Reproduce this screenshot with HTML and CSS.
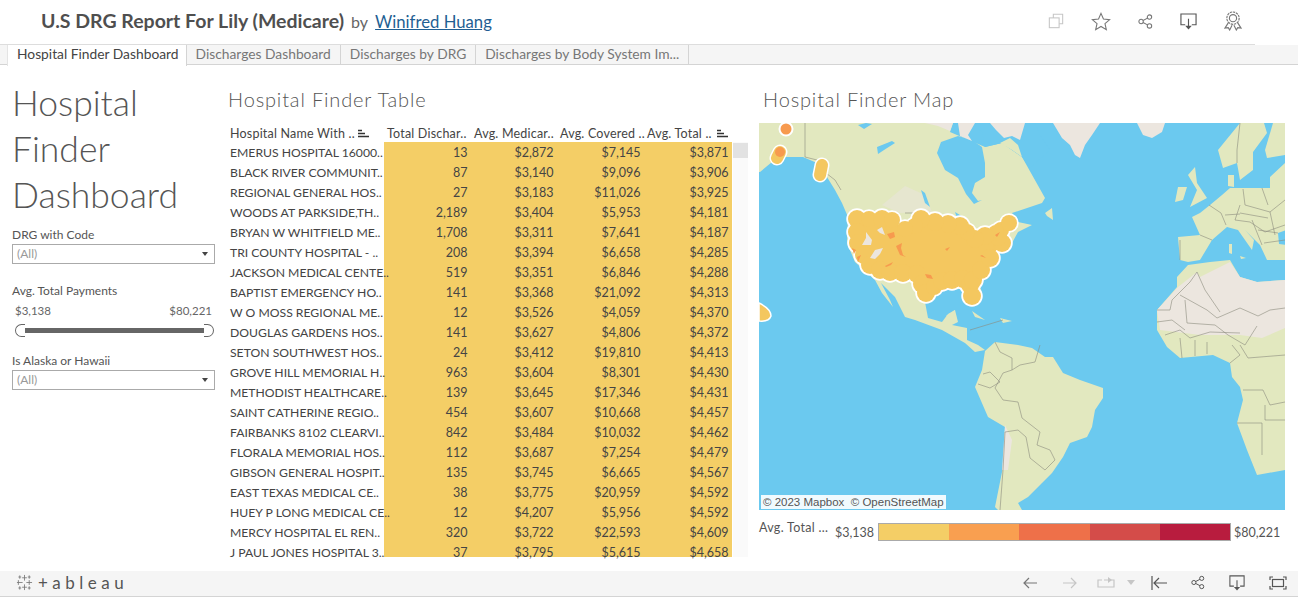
FILE: index.html
```html
<!DOCTYPE html>
<html lang="en">
<head>
  <meta charset="UTF-8" />
  <title>U.S DRG Report For Lily (Medicare)</title>
  <link rel="stylesheet" href="styles.css">
</head>
<body>

  <!-- Top title bar -->
  <header class="topbar">
    <div class="report-title">
      <strong>U.S DRG Report For Lily (Medicare)</strong>
      <span class="by">by</span>
      <a class="author" href="#">Winifred Huang</a>
    </div>
    <div class="top-icons">
      <svg class="icon faded" width="16" height="16" viewBox="0 0 18 18"><path d="M6 5.500V1.500H16.500V12H12.500"/><rect x="1.500" y="5.500" width="11" height="11"/></svg>
      <svg class="icon" width="20" height="19" viewBox="0 0 22 21"><path d="M11 1.500L13.700 7.800L20.500 8.400L15.400 12.800L16.900 19.500L11 16L5.100 19.500L6.600 12.800L1.500 8.400L8.300 7.800Z"/></svg>
      <svg class="icon" width="15" height="15" viewBox="0 0 17 17"><circle cx="3.500" cy="8.500" r="2.500"/><circle cx="13" cy="3.500" r="2.500"/><circle cx="13" cy="13.500" r="2.500"/><path d="M5.700 7.300L10.800 4.700M5.700 9.700L10.800 12.300"/></svg>
      <svg class="icon dark" width="17" height="17" viewBox="0 0 18 18"><path d="M5.500 12.500H1V1H17V12.500H12.500M9 6V15"/><path class="solid" d="M5.500 13.500H12.500L9 17.500Z"/></svg>
      <svg class="icon" width="18" height="20" viewBox="0 0 19 21"><circle cx="9.500" cy="7.500" r="6.500" stroke-dasharray="2.500 0.800"/><circle cx="9.500" cy="7.500" r="3.800"/><path d="M4.500 12.500L1 18L4.500 17.500L6 20L8.500 15M14.500 12.500L18 18L14.500 17.500L13 20L10.500 15"/></svg>
    </div>
  </header>

  <!-- Sheet tabs -->
  <nav class="tabs">
    <span class="tab active">Hospital Finder Dashboard</span>
    <span class="tab">Discharges Dashboard</span>
    <span class="tab">Discharges by DRG</span>
    <span class="tab">Discharges by Body System Im...</span>
  </nav>

  <main class="dashboard">

    <!-- Left column with filters -->
    <aside class="filters">
      <h1 class="dash-title">Hospital<br>Finder<br>Dashboard</h1>

      <div class="filter-label">DRG with Code</div>
      <div class="select"><span>(All)</span><i class="caret"></i></div>

      <div class="filter-label slider-label">Avg. Total Payments</div>
      <div class="range-values"><span>$3,138</span><span>$80,221</span></div>
      <div class="slider">
        <span class="handle left"></span>
        <span class="track"></span>
        <span class="handle right"></span>
      </div>

      <div class="filter-label alaska-label">Is Alaska or Hawaii</div>
      <div class="select"><span>(All)</span><i class="caret"></i></div>
    </aside>

    <!-- Table -->
    <section class="table-panel">
      <h2 class="panel-title">Hospital Finder Table</h2>
      <div class="table-head">
        <div class="head-cell name">Hospital Name With ..
          <svg class="sort" width="11" height="9" viewBox="0 0 11 9"><path d="M0 1.500H4M0 4.500H7M0 7.500H11"/></svg>
        </div>
        <div class="head-cell">Total Dischar..</div>
        <div class="head-cell">Avg. Medicar..</div>
        <div class="head-cell">Avg. Covered ..</div>
        <div class="head-cell">Avg. Total ..
          <svg class="sort" width="11" height="9" viewBox="0 0 11 9"><path d="M0 1.500H4M0 4.500H7M0 7.500H11"/></svg>
        </div>
      </div>
      <div class="table-wrap">
        <div class="table-body">
          <div class="row"><span>EMERUS HOSPITAL 16000..</span><span>13</span><span>$2,872</span><span>$7,145</span><span>$3,871</span></div>
          <div class="row"><span>BLACK RIVER COMMUNIT..</span><span>87</span><span>$3,140</span><span>$9,096</span><span>$3,906</span></div>
          <div class="row"><span>REGIONAL GENERAL HOS..</span><span>27</span><span>$3,183</span><span>$11,026</span><span>$3,925</span></div>
          <div class="row"><span>WOODS AT PARKSIDE,TH..</span><span>2,189</span><span>$3,404</span><span>$5,953</span><span>$4,181</span></div>
          <div class="row"><span>BRYAN W WHITFIELD ME..</span><span>1,708</span><span>$3,311</span><span>$7,641</span><span>$4,187</span></div>
          <div class="row"><span>TRI COUNTY HOSPITAL - ..</span><span>208</span><span>$3,394</span><span>$6,658</span><span>$4,285</span></div>
          <div class="row"><span>JACKSON MEDICAL CENTE..</span><span>519</span><span>$3,351</span><span>$6,846</span><span>$4,288</span></div>
          <div class="row"><span>BAPTIST EMERGENCY HO..</span><span>141</span><span>$3,368</span><span>$21,092</span><span>$4,313</span></div>
          <div class="row"><span>W O MOSS REGIONAL ME..</span><span>12</span><span>$3,526</span><span>$4,059</span><span>$4,370</span></div>
          <div class="row"><span>DOUGLAS GARDENS HOS..</span><span>141</span><span>$3,627</span><span>$4,806</span><span>$4,372</span></div>
          <div class="row"><span>SETON SOUTHWEST HOS..</span><span>24</span><span>$3,412</span><span>$19,810</span><span>$4,413</span></div>
          <div class="row"><span>GROVE HILL MEMORIAL H..</span><span>963</span><span>$3,604</span><span>$8,301</span><span>$4,430</span></div>
          <div class="row"><span>METHODIST HEALTHCARE..</span><span>139</span><span>$3,645</span><span>$17,346</span><span>$4,431</span></div>
          <div class="row"><span>SAINT CATHERINE REGIO..</span><span>454</span><span>$3,607</span><span>$10,668</span><span>$4,457</span></div>
          <div class="row"><span>FAIRBANKS 8102 CLEARVI..</span><span>842</span><span>$3,484</span><span>$10,032</span><span>$4,462</span></div>
          <div class="row"><span>FLORALA MEMORIAL HOS..</span><span>112</span><span>$3,687</span><span>$7,254</span><span>$4,479</span></div>
          <div class="row"><span>GIBSON GENERAL HOSPIT..</span><span>135</span><span>$3,745</span><span>$6,665</span><span>$4,567</span></div>
          <div class="row"><span>EAST TEXAS MEDICAL CE..</span><span>38</span><span>$3,775</span><span>$20,959</span><span>$4,592</span></div>
          <div class="row"><span>HUEY P LONG MEDICAL CE..</span><span>12</span><span>$4,207</span><span>$5,956</span><span>$4,592</span></div>
          <div class="row"><span>MERCY HOSPITAL EL REN..</span><span>320</span><span>$3,722</span><span>$22,593</span><span>$4,609</span></div>
          <div class="row"><span>J PAUL JONES HOSPITAL 3..</span><span>37</span><span>$3,795</span><span>$5,615</span><span>$4,658</span></div>
        </div>
        <div class="scrollbar"><div class="thumb"></div></div>
      </div>
    </section>

    <!-- Map -->
    <section class="map-panel">
      <h2 class="panel-title map-title">Hospital Finder Map</h2>
      <div class="map">
        <svg class="map-svg" width="527" height="387" viewBox="759 123 527 387">
          <defs>
            <g id="usBlob">
              <path d="M857 219L858 243L870 265L890 272L917 274L926 293L942 281L963 279L971 296L973 280L1002 243L1007 223L975 239L960 226L921 219L913 229L882 219Z"/>
              <circle cx="857" cy="219" r="9"/><circle cx="869" cy="219" r="8"/><circle cx="882" cy="219" r="9"/><circle cx="892" cy="220" r="8"/>
              <circle cx="857" cy="232" r="9"/><circle cx="858" cy="243" r="9"/><circle cx="864" cy="255" r="9"/><circle cx="870" cy="265" r="9"/>
              <circle cx="880" cy="270" r="9"/><circle cx="890" cy="272" r="9"/><circle cx="903" cy="273" r="9"/><circle cx="917" cy="274" r="9"/>
              <circle cx="922" cy="284" r="9"/><circle cx="926" cy="293" r="9"/><circle cx="934" cy="287" r="8"/><circle cx="942" cy="281" r="9"/>
              <circle cx="952" cy="280" r="9"/><circle cx="963" cy="279" r="9"/><circle cx="970" cy="285" r="9"/><circle cx="972" cy="296" r="9"/>
              <circle cx="973" cy="280" r="9"/><circle cx="981" cy="270" r="9"/><circle cx="990" cy="258" r="9"/><circle cx="1002" cy="243" r="9"/>
              <circle cx="998" cy="237" r="9"/><circle cx="1001" cy="230" r="8"/><circle cx="1009" cy="223" r="8"/><circle cx="996" cy="233" r="8"/>
              <circle cx="985" cy="236" r="9"/><circle cx="975" cy="239" r="9"/><circle cx="967" cy="232" r="8"/><circle cx="960" cy="226" r="9"/>
              <circle cx="948" cy="224" r="9"/><circle cx="935" cy="222" r="9"/><circle cx="921" cy="219" r="9"/><circle cx="915" cy="226" r="8"/><circle cx="905" cy="229" r="8"/>
            </g>
          </defs>

          <rect class="ocean" x="759" y="123" width="527" height="387"/>

          <!-- north and central america -->
          <path class="land" d="M759 123H953L950 132L985 147L1002 143L1022 157L1045 198L1042 203L1012 213L1018 222L1032 225L1018 232L1012 243L1002 250L978 280L982 293L972 305L962 288L942 290L925 302L928 318L942 322L948 314L955 310L958 322L952 325L967 328L967 340L978 345L985 350L975 352L965 343L942 330L915 320L905 317L895 297L881 283L890 300L893 307L882 293L875 280L855 262L847 243L848 217L842 203L835 190L827 177L817 163L803 157L785 157L772 162L760 172L759 172Z"/>
          <path class="tint" d="M882 205L905 186L925 195L932 212L900 213Z"/>
          <path class="snow" d="M925 123H953L950 131L938 126Z"/>
          <path class="ocean" d="M937 153L941 142L958 136L972 140L982 147L985 163L985 177L975 183L972 193L978 201L982 200L974 204L966 194L958 178L945 170Z"/>
          <path class="ocean" d="M985 147L982 132L972 123H1035L1040 135L1050 150L1030 168L1022 157L1002 143Z"/>
          <path class="snow" d="M958 123H975L968 135L972 141L960 136ZM990 123H1025L1020 140L1012 136L1004 138L996 130Z"/>
          <path class="land" d="M1000 143L1010 138L1018 145L1022 157L1012 150Z"/>
          <path class="ocean" d="M858 125L866 123L872 124L864 129ZM877 147L892 141L895 143L884 150L878 154ZM921 190L925 193L930 207L925 203ZM955 212L968 220L975 230L968 226L957 218Z"/>
          <path class="land" d="M1045 213L1052 208L1053 220L1047 216ZM972 311L985 320L975 317ZM1000 318L1012 321L1003 323Z"/>
          <path class="land" d="M946 316L955 310L953 320Z"/>

          <!-- greenland, iceland -->
          <path class="snow" d="M1053 123H1100L1092 135L1085 145L1080 158L1075 155L1070 145L1062 138Z"/>
          <path class="snow" d="M1137 123H1165L1162 132L1152 138L1143 135Z"/>

          <!-- south america -->
          <path class="land" d="M985 351L995 342L1018 345L1032 348L1045 357L1053 357L1063 373L1080 380L1103 388L1103 398L1095 410L1092 427L1087 437L1070 443L1063 457L1052 473L1042 483L1028 497L1018 503L1022 510H998L995 507L1003 467L1005 427L988 417L975 387L982 370Z"/>
          <path class="snow" d="M1005 425L1012 440L1008 470L1002 470Z"/>

          <!-- africa -->
          <path class="land" d="M1188 265L1177 277L1177 287L1157 310L1157 330L1167 347L1180 358L1213 355L1230 363L1232 377L1240 387L1243 400L1237 423L1247 450L1257 475L1285 470V280L1257 282L1240 277L1230 260L1210 262Z"/>
          <path class="snow" d="M1157 310L1178 287L1197 272L1200 277L1230 262L1240 277L1257 282L1285 280V328L1262 338L1240 335L1200 335L1160 330Z"/>

          <!-- europe -->
          <path class="land" d="M1178 237L1180 260L1188 262L1200 260L1212 240L1227 227L1238 230L1252 250L1254 240L1245 230L1260 245L1267 260L1285 260V163L1270 177L1270 188L1253 188L1230 188L1222 195L1210 205L1200 213L1192 217L1200 235Z"/>
          <path class="land" d="M1218 150L1223 168L1237 163L1240 180L1253 170L1253 152L1267 133L1264 123H1240Z"/>
          <path class="land" d="M1273 123L1265 150L1267 158L1285 155V123Z"/>
          <path class="land" d="M1188 175L1195 167L1197 183L1207 198L1190 207L1197 190Z"/>
          <path class="land" d="M1178 187L1187 187L1183 200L1175 202Z"/>
          <path class="land" d="M1228 175L1234 175L1234 187L1228 186Z"/>
          <path class="land" d="M1229 244L1232 244L1232 254L1229 253ZM1240 256L1246 258L1241 259Z"/>
          <path class="ocean" d="M1278 233L1286 230V245L1279 244Z"/>

          <!-- borders -->
          <path class="border" d="M805 123V157L817 160L822 170L835 180L841 190M905 213H920M1003 320L970 330"/>
          <path class="border" d="M995 342L1000 352L1012 358L1012 370L1020 365L1035 362L1040 345M1012 370L1003 373L995 388L1003 400L1018 402L1022 418L1040 432L1037 445L1050 450L1055 460L1045 470L1030 458L1026 437L1018 430L1005 432L1003 470L1000 510M983 374L990 372L1000 382L990 388L978 384"/>
          <path class="border" d="M1180 260V240M1200 235L1212 240M1209 205L1221 213L1226 225M1243 189L1245 205L1270 212L1285 200M1240 205L1235 220L1250 222L1265 232L1285 225M1240 123L1237 150L1237 163M1252 220L1262 245M1270 212L1275 235M1262 188L1268 205M1240 213L1268 218M1258 230L1278 233M1264 243L1285 240M1225 215L1240 214"/>
          <path class="border" d="M1157 310H1170L1172 300L1190 282L1197 272M1180 295L1207 310L1217 318L1240 308L1258 316L1270 310L1285 308M1185 300L1187 323L1215 325L1228 335L1245 345L1257 326M1197 272L1205 290L1220 312M1165 335L1180 330L1190 338L1210 332L1240 333M1180 338L1182 358M1195 340V356M1207 342V354M1240 345L1248 358L1285 355M1243 390H1263L1270 405L1285 402M1237 423H1262L1262 455M1265 405V420H1285M1157 322L1172 320L1185 330M1230 363L1240 355L1232 345"/>

          <!-- hospital marks -->
          <use class="halo" href="#usBlob"/>
          <path class="halo-line" d="M777 158L780 152M822 165L820 175M786 129V129.010"/>
          <path class="hawaii" d="M759 303Q771 309 771 316Q769 322 759 321Z"/>
          <use class="us" href="#usBlob"/>
          <path class="us-thin" d="M777 158L780 152M822 165L820 175"/>
          <path class="holes" d="M862 245L866 238L866 232L872 240L871 245ZM877 230L882 227L885 235L880 233ZM870 258L875 250L883 248L880 254L875 259Z"/>
          <path class="hot" d="M887 234L894 232L895 237L890 239ZM896 246L902 243L901 248L903 255L906 257L900 255ZM885 266L893 262L891 265L886 267ZM852 248L856 250L854 254ZM857 257L861 255L858 262ZM945 249L950 247L947 251ZM925 274L931 275L933 279L927 278ZM982 255L986 258L980 256ZM1000 232L997 237L995 235Z"/>
          <circle class="hot" cx="786" cy="129" r="5.500"/>
          <circle class="hot" cx="780" cy="152" r="5"/>
        </svg>
        <div class="attribution">© 2023 Mapbox&nbsp; © OpenStreetMap</div>
      </div>
      <div class="legend">
        <span class="legend-name">Avg. Total ...</span>
        <span class="legend-min">$3,138</span>
        <div class="ramp"><i class="c1"></i><i class="c2"></i><i class="c3"></i><i class="c4"></i><i class="c5"></i></div>
        <span class="legend-max">$80,221</span>
      </div>
    </section>
  </main>

  <!-- Bottom toolbar -->
  <footer class="toolbar">
    <div class="logo">
      <svg class="logo-mark" width="17" height="17" viewBox="0 0 18 18"><path d="M9 1V7M6.500 4H11.500M9 11V17M6.500 14H11.500M1 9H7M2.500 6.500V11.500M11 9H17M14 6.500V11.500M4 1.500V5M2.500 3.200H5.500M14 1.500V5M12.500 3.200H15.500M4 13V16.500M2.500 14.800H5.500M14 13V16.500M12.500 14.800H15.500"/></svg>
      <span class="logo-text">+ableau</span>
    </div>
    <div class="tool-icons">
      <svg class="icon" width="14" height="12" viewBox="0 0 14 12"><path d="M14 6H1M6 1L1 6L6 11"/></svg>
      <svg class="icon faded tool-fwd" width="14" height="12" viewBox="0 0 14 12"><path d="M0 6H13M8 1L13 6L8 11"/></svg>
      <svg class="icon faded tool-redo" width="18" height="12" viewBox="0 0 18 12"><path d="M5 3H1V10H17V3H12M7 3H13"/><path class="solid" d="M11 0L15 3L11 6Z"/></svg>
      <svg class="caret-small" width="8" height="5" viewBox="0 0 8 5"><path d="M0 0H8L4 5Z"/></svg>
      <svg class="icon dark" width="16" height="14" viewBox="0 0 16 14"><path d="M1 0V14M16 7H3M8 2L3 7L8 12"/></svg>
      <svg class="icon dark" width="14" height="15" viewBox="0 0 17 17"><circle cx="3.500" cy="8.500" r="2.500"/><circle cx="13" cy="3.500" r="2.500"/><circle cx="13" cy="13.500" r="2.500"/><path d="M5.700 7.300L10.800 4.700M5.700 9.700L10.800 12.300"/></svg>
      <svg class="icon dark" width="16" height="16" viewBox="0 0 18 18"><path d="M5.500 12.500H1V1H17V12.500H12.500M9 6V15"/><path class="solid" d="M5.500 13.500H12.500L9 17.500Z"/></svg>
      <svg class="icon dark" width="18" height="14" viewBox="0 0 18 14"><path d="M1 4V1H4M14 1H17V4M17 10V13H14M4 13H1V10"/><rect x="3.500" y="3.500" width="11" height="7"/></svg>
    </div>
  </footer>

</body>
</html>
```
FILE: styles.css
```css
* {
  box-sizing: border-box;
}

body {
  margin: 0;
  width: 1302px;
  height: 598px;
  overflow: hidden;
  background: #fff;
  font-family: Lato, 'Open Sans', sans-serif;
  color: #333;
  display: flex;
  flex-direction: column;
}

/* top bar */
.topbar {
  height: 45px;
  margin: 0 47px 0 0;
  padding: 0 0 0 41px;
  border-bottom: 1px solid #ddd;
  display: flex;
  align-items: center;
  justify-content: space-between;
  flex-shrink: 0;
}

.report-title {
  font-size: 19.500px;
  color: #4f4f4f;
  padding-bottom: 4px;
}

.report-title strong {
  font-weight: 700;
}

.by {
  font-size: 16px;
  color: #666;
  margin: 0 2px;
}

.author {
  font-size: 16.700px;
  color: #1f5f93;
}

.top-icons {
  display: flex;
  align-items: center;
  gap: 27px;
  margin-right: 13px;
  padding-bottom: 2px;
}

.icon {
  fill: none;
  stroke: #777;
  stroke-width: 1.200;
  display: block;
}

.icon.faded {
  stroke: #c6c6c6;
}

.icon.dark {
  stroke: #555;
}

.icon .solid {
  fill: #555;
  stroke: none;
}

.icon.faded .solid {
  fill: #c6c6c6;
}

/* tabs */
.tabs {
  height: 20px;
  margin-right: 4px;
  padding-left: 7px;
  background: #f5f5f5;
  border-bottom: 1px solid #d4d4d4;
  display: flex;
  flex-shrink: 0;
}

.tab {
  height: 20px;
  padding: 0 9px;
  font-size: 13.800px;
  line-height: 18px;
  color: #777;
  border-right: 1px solid #d4d4d4;
  white-space: nowrap;
}

.tab.active {
  background: #fff;
  color: #444;
  border-left: 1px solid #e4e4e4;
  padding: 0 7px 0 9px;
  height: 21px;
}

/* dashboard */
.dashboard {
  flex: 1;
  min-height: 0;
  display: flex;
  overflow: hidden;
}

.filters {
  width: 203px;
  margin-left: 12px;
  flex-shrink: 0;
}

.dash-title {
  margin: 15px 0 0;
  font-size: 35.500px;
  font-weight: 300;
  line-height: 46px;
  color: #555;
}

.filter-label {
  font-size: 12px;
  line-height: 16px;
  color: #555;
  margin-top: 9px;
}

.slider-label {
  margin-top: 19px;
}

.alaska-label {
  margin-top: 16px;
}

.select {
  height: 20px;
  margin-top: 1px;
  padding: 0 6px 0 4px;
  border: 1px solid #aaa;
  font-size: 12px;
  line-height: 18px;
  color: #999;
  display: flex;
  justify-content: space-between;
  align-items: center;
}

.caret {
  width: 0;
  height: 0;
  border-left: 3.500px solid transparent;
  border-right: 3.500px solid transparent;
  border-top: 4px solid #444;
}

.range-values {
  display: flex;
  justify-content: space-between;
  padding: 0 3px;
  margin-top: 5px;
  font-size: 11.500px;
  line-height: 14px;
  color: #666;
}

.slider {
  display: flex;
  align-items: center;
  height: 14px;
  margin-top: 5px;
  padding-left: 3px;
  padding-right: 1px;
}

.track {
  flex: 1;
  height: 5px;
  background: #666;
}

.handle {
  width: 10px;
  height: 13px;
  border: 1px solid #666;
  background: #fff;
}

.handle.left {
  border-radius: 7px 0 0 7px;
  border-right: none;
}

.handle.right {
  border-radius: 0 7px 7px 0;
  border-left: none;
}

/* table */
.table-panel {
  width: 531px;
  margin-left: 13px;
  flex-shrink: 0;
}

.panel-title {
  margin: 21px 0 0;
  font-size: 20px;
  font-weight: 300;
  line-height: 27px;
  letter-spacing: 0.850px;
  color: #555;
}

.table-head {
  display: grid;
  grid-template-columns: 156px 87px 86px 87px 88px;
  margin-top: 10px;
  height: 19px;
  padding-top: 2px;
  font-size: 12.500px;
  line-height: 18px;
  letter-spacing: 0.200px;
  color: #444;
  padding-left: 2px;
}

.head-cell {
  padding-left: 1px;
  white-space: nowrap;
}

.head-cell.name {
  padding-left: 0;
}

.sort {
  fill: none;
  stroke: #333;
  stroke-width: 1.300;
  margin-left: 2px;
}

.name .sort {
  margin-left: 0;
}

.table-wrap {
  display: flex;
  align-items: flex-start;
  height: 415px;
}

.table-body {
  width: 504px;
  height: 415px;
  padding-top: 1px;
  background: linear-gradient(90deg, #fff 156px, #f4ce66 156px);
}

.row {
  display: grid;
  grid-template-columns: 156px 87px 86px 87px 88px;
  height: 20px;
  padding-left: 2px;
  font-size: 12.500px;
  line-height: 20px;
  color: #444;
}

.row span {
  padding-right: 5.500px;
  text-align: right;
  white-space: nowrap;
}

.row span:first-child {
  text-align: left;
  padding-right: 0;
  font-size: 12.200px;
}

.scrollbar {
  width: 15px;
  height: 415px;
  margin-left: 1px;
  background: #fafafa;
}

.thumb {
  height: 15px;
  margin-top: 1px;
  background: #e2e2e2;
}

/* map */
.map-panel {
  width: 527px;
  flex-shrink: 0;
}

.map-title {
  padding-left: 4px;
}

.map {
  position: relative;
  width: 526px;
  height: 387px;
  margin-top: 10px;
  overflow: hidden;
}

.map-svg {
  display: block;
}

.ocean {
  fill: #6bc9ef;
}

.land {
  fill: #e2e8bf;
}

.tint {
  fill: #e6e6cf;
}

.snow {
  fill: #ece6df;
}

.border {
  fill: none;
  stroke: #8b8b7d;
  stroke-width: 0.600;
}

.halo {
  fill: #fff;
  stroke: #fff;
  stroke-width: 3.500;
}

.halo-line {
  fill: none;
  stroke: #fff;
  stroke-width: 15;
  stroke-linecap: round;
}

.us {
  fill: #f4c75f;
}

.us-thin {
  fill: none;
  stroke: #f4c75f;
  stroke-width: 12;
  stroke-linecap: round;
}

.hawaii {
  fill: #f4c75f;
  stroke: #fff;
  stroke-width: 1.500;
}

.holes {
  fill: #ece6df;
}

.hot {
  fill: #f79a4e;
}

.attribution {
  position: absolute;
  left: 2px;
  bottom: 1px;
  padding: 0 2px;
  height: 14px;
  background: rgba(255, 255, 255, 0.9);
  font-family: 'Liberation Sans', sans-serif;
  font-size: 11.500px;
  line-height: 14px;
  color: #555;
  white-space: nowrap;
}

.legend {
  display: flex;
  align-items: center;
  height: 18px;
  margin-top: 13px;
  font-size: 12.500px;
  color: #555;
}

.legend-name {
  width: 76px;
  position: relative;
  top: -5px;
  letter-spacing: 0.300px;
}

.legend-min {
  width: 43px;
}

.ramp {
  width: 353px;
  height: 18px;
  border: 1px solid #aaa;
  display: flex;
}

.ramp i {
  flex: 1;
}

.c1 { background: #f4ce66; }
.c2 { background: #f99f50; }
.c3 { background: #ee7049; }
.c4 { background: #d44c49; }
.c5 { background: #b81c3e; }

.legend-max {
  margin-left: 3px;
}

/* bottom toolbar */
.toolbar {
  height: 26px;
  margin: 0 4px 1px 0;
  padding: 0 11px 2px 16px;
  background: #f5f5f5;
  border-bottom: 1px solid #d4d4d4;
  display: flex;
  align-items: center;
  justify-content: space-between;
  flex-shrink: 0;
}

.logo {
  display: flex;
  align-items: center;
  gap: 5px;
}

.logo-mark {
  fill: none;
  stroke: #777;
  stroke-width: 0.900;
}

.logo-text {
  font-size: 17px;
  letter-spacing: 4.500px;
  color: #555;
}

.tool-icons {
  display: flex;
  align-items: center;
  gap: 24px;
}

.tool-fwd {
  margin-left: 2px;
}

.tool-redo {
  margin-left: -4px;
}

.caret-small {
  fill: #c6c6c6;
  margin: 0 -8px 0 -12px;
}
```
